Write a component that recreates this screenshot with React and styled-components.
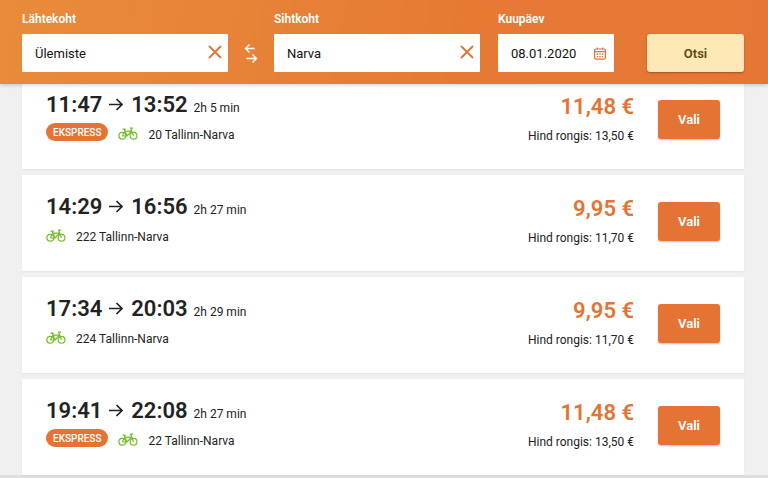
import React, { useState } from "react";
import styled, { createGlobalStyle } from "styled-components";

const GlobalStyle = createGlobalStyle`
  * {
    box-sizing: border-box;
  }
  body {
    margin: 0;
    background: #f0f0f0;
    color: #222;
    font-family: Roboto, "Liberation Sans", sans-serif;
    font-size: 12px;
  }
  button,
  input {
    font-family: inherit;
    font-size: 13px;
  }
`;

const Header = styled.header`
  position: sticky;
  top: 0;
  z-index: 1;
  padding: 10px 24px 12px 22px;
  background: linear-gradient(100deg, #e98b3a 0%, #e67a35 60%, #e67635 100%);
  box-shadow: 0 1px 4px rgba(0, 0, 0, 0.2);
`;
const SearchForm = styled.form`
  display: grid;
  grid-template-columns: 206fr 46px 206fr 18px 116fr 33px 97fr;
  align-items: end;
`;
const Field = styled.div`
  grid-column: ${({ $column }) => $column};
  min-width: 0;
`;
const Label = styled.label`
  display: block;
  height: 24px;
  line-height: 18px;
  color: #fff;
  font-weight: 600;
`;
const InputBox = styled.div`
  display: flex;
  align-items: center;
  height: 38px;
  padding: 0 6px 0 13px;
  background: #fff;
  border-radius: 1px;
`;
const Input = styled.input`
  flex: 1;
  min-width: 0;
  padding: 0;
  border: 0;
  outline: 0;
  background: transparent;
  color: #111;
`;
const IconButton = styled.button`
  display: flex;
  align-items: center;
  justify-content: center;
  padding: 0;
  border: 0;
  background: transparent;
  color: ${({ $light }) => ($light ? "#fff" : "#e57333")};
  cursor: pointer;
`;
const ClearButton = styled(IconButton)`
  padding-bottom: 3px;
`;
const DateButton = styled(IconButton)`
  padding-right: 2px;
`;
const SwapButton = styled(IconButton)`
  height: 38px;
`;
const SearchButton = styled.button`
  grid-column: 7;
  height: 38px;
  border: 0;
  border-radius: 3px;
  background: #fee8b5;
  box-shadow: 0 1px 2px rgba(0, 0, 0, 0.3);
  color: #5b4710;
  font-weight: 600;
  cursor: pointer;
`;

const TripList = styled.main`
  display: flex;
  flex-direction: column;
  gap: 6px;
  margin-top: -11px;
  padding: 0 24px 0 22px;
  border-bottom: 3px solid #dfdfdf;
`;
const TripCard = styled.article`
  display: flex;
  align-items: flex-start;
  height: 96px;
  padding: 0 24px;
  background: #fff;
  box-shadow: 0 1px 2px rgba(0, 0, 0, 0.06);
`;
const TripInfo = styled.div`
  flex: 1;
  padding-top: 18px;
`;
const TimeRow = styled.div`
  display: flex;
  align-items: baseline;
  height: 32px;
  line-height: 28px;
`;
const Time = styled.span`
  font-size: 22px;
  font-weight: 600;
`;
const Arrow = styled.svg`
  width: 14px;
  height: 14px;
  margin: 0 8px 0 7px;
`;
const Duration = styled.span`
  margin-left: 6px;
`;
const RouteRow = styled.div`
  display: flex;
  align-items: center;
  height: 24px;
`;
const Badge = styled.span`
  height: 18px;
  margin: 0 10px 6px 0;
  padding: 0 7px;
  border-radius: 9px;
  background: #e57333;
  color: #fff;
  font-size: 10px;
  font-weight: 500;
  line-height: 19px;
`;
const BikeIcon = styled.svg`
  width: 20px;
  height: 14px;
  margin-bottom: 3px;
`;
const Route = styled.span`
  margin-left: 10px;
`;
const PriceInfo = styled.div`
  padding-top: 19px;
  text-align: right;
`;
const Price = styled.div`
  color: #e57333;
  font-size: 22px;
  font-weight: 600;
  line-height: 30px;
`;
const TrainPrice = styled.div`
  line-height: 28px;
`;
const SelectButton = styled.button`
  width: 62px;
  height: 39px;
  margin: 27px 0 0 24px;
  border: 0;
  border-radius: 3px;
  background: #e57333;
  box-shadow: 0 1px 2px rgba(0, 0, 0, 0.25);
  color: #fff;
  font-weight: 600;
  cursor: pointer;
`;

const trips = [
  { from: "11:47", to: "13:52", duration: "2h 5 min", express: true, route: "20 Tallinn-Narva", price: "11,48 €", trainPrice: "13,50 €" },
  { from: "14:29", to: "16:56", duration: "2h 27 min", express: false, route: "222 Tallinn-Narva", price: "9,95 €", trainPrice: "11,70 €" },
  { from: "17:34", to: "20:03", duration: "2h 29 min", express: false, route: "224 Tallinn-Narva", price: "9,95 €", trainPrice: "11,70 €" },
  { from: "19:41", to: "22:08", duration: "2h 27 min", express: true, route: "22 Tallinn-Narva", price: "11,48 €", trainPrice: "13,50 €" },
];

const CloseIcon = () => (
  <svg width="14" height="14" viewBox="0 0 14 14" fill="none" stroke="currentColor" strokeWidth="1.8">
    <path d="M1 1l12 12M13 1L1 13" />
  </svg>
);

const SwapIcon = () => (
  <svg width="14" height="22" viewBox="0 0 14 22" fill="none" stroke="currentColor" strokeWidth="1.4">
    <path d="M10.5 6.5H1.5M5.5 2.5l-4 4 4 4M2.5 16.5h10M8.5 12.5l4 4-4 4" />
  </svg>
);

const CalendarIcon = () => (
  <svg width="12" height="13" viewBox="0 0 12 13" fill="none" stroke="currentColor">
    <rect x=".6" y="2" width="10.8" height="10.2" rx="1.5" strokeWidth="1.2" />
    <path d="M1 4.7h10M3.3 .4v2.4M8.7 .4v2.4" strokeWidth="1.2" />
    <path d="M2.8 7h1.4M5.3 7h1.4M7.8 7h1.4M2.8 9.6h1.4M5.3 9.6h1.4M7.8 9.6h1.4" strokeWidth="1.3" />
  </svg>
);

const Bike = () => (
  <BikeIcon viewBox="0 0 20 14" fill="none" stroke="#76bc2c" strokeWidth="1.2" role="img" aria-label="Jalgratas">
    <circle cx="4.3" cy="8.8" r="3.4" />
    <circle cx="15.5" cy="8.8" r="3.4" />
    <path d="M4.3 8.8l2.7-4.6h6.4L9.2 9H4.3M9.2 9L6.2 2.2M4.4 2.2h3.4M15.5 8.8L12.6 1.2h2.6" />
  </BikeIcon>
);

function Trip({ trip }) {
  return (
    <TripCard>
      <TripInfo>
        <TimeRow>
          <Time>{trip.from}</Time>
          <Arrow viewBox="0 0 14 14" fill="none" stroke="#222" strokeWidth="1.7" aria-hidden="true">
            <path d="M0 6.5h12.5M7.5 1L13 6.5 7.5 12" />
          </Arrow>
          <Time>{trip.to}</Time>
          <Duration>{trip.duration}</Duration>
        </TimeRow>
        <RouteRow>
          {trip.express && <Badge>EKSPRESS</Badge>}
          <Bike />
          <Route>{trip.route}</Route>
        </RouteRow>
      </TripInfo>
      <PriceInfo>
        <Price>{trip.price}</Price>
        <TrainPrice>Hind rongis: {trip.trainPrice}</TrainPrice>
      </PriceInfo>
      <SelectButton type="button">Vali</SelectButton>
    </TripCard>
  );
}

function App() {
  const [origin, setOrigin] = useState("Ülemiste");
  const [destination, setDestination] = useState("Narva");
  const [date, setDate] = useState("08.01.2020");

  const swap = () => {
    setOrigin(destination);
    setDestination(origin);
  };

  return (
    <>
      <GlobalStyle />
      <Header>
        <SearchForm onSubmit={(e) => e.preventDefault()}>
          <Field $column={1}>
            <Label htmlFor="origin">Lähtekoht</Label>
            <InputBox>
              <Input id="origin" value={origin} onChange={(e) => setOrigin(e.target.value)} />
              <ClearButton type="button" aria-label="Tühjenda lähtekoht" onClick={() => setOrigin("")}>
                <CloseIcon />
              </ClearButton>
            </InputBox>
          </Field>
          <SwapButton $light type="button" aria-label="Vaheta suunda" onClick={swap}>
            <SwapIcon />
          </SwapButton>
          <Field $column={3}>
            <Label htmlFor="destination">Sihtkoht</Label>
            <InputBox>
              <Input id="destination" value={destination} onChange={(e) => setDestination(e.target.value)} />
              <ClearButton type="button" aria-label="Tühjenda sihtkoht" onClick={() => setDestination("")}>
                <CloseIcon />
              </ClearButton>
            </InputBox>
          </Field>
          <Field $column={5}>
            <Label htmlFor="date">Kuupäev</Label>
            <InputBox>
              <Input id="date" value={date} onChange={(e) => setDate(e.target.value)} />
              <DateButton type="button" aria-label="Ava kalender">
                <CalendarIcon />
              </DateButton>
            </InputBox>
          </Field>
          <SearchButton type="submit">Otsi</SearchButton>
        </SearchForm>
      </Header>
      <TripList>
        {trips.map((trip) => (
          <Trip key={trip.route} trip={trip} />
        ))}
      </TripList>
    </>
  );
}

export default App;
